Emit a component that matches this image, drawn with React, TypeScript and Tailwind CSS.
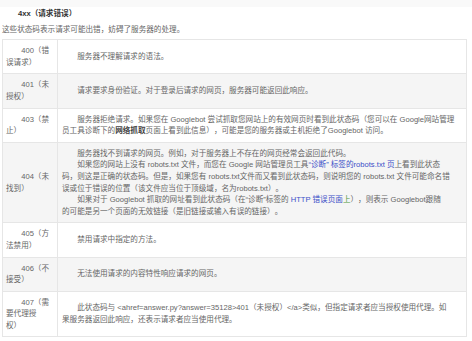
const rows: { code: string; desc: React.ReactNode; gray?: boolean }[] = [
  { code: "400（错误请求）", desc: <p className="indent-[2em]">服务器不理解请求的语法。</p> },
  {
    code: "401（未授权）",
    gray: true,
    desc: <p className="indent-[2em]">请求要求身份验证。对于登录后请求的网页，服务器可能返回此响应。</p>,
  },
  {
    code: "403（禁止）",
    desc: (
      <p className="indent-[2em]">
        服务器拒绝请求。如果您在 Googlebot 尝试抓取您网站上的有效网页时看到此状态码（您可以在 Google网站管理
        <br />
        员工具诊断下的<b className="font-bold text-[#444]">网络抓取</b>
        页面上看到此信息），可能是您的服务器或主机拒绝了Googlebot 访问。
      </p>
    ),
  },
  {
    code: "404（未找到）",
    gray: true,
    desc: (
      <>
        <p className="indent-[2em]">服务器找不到请求的网页。例如，对于服务器上不存在的网页经常会返回此代码。</p>
        <p className="indent-[2em]">
          如果您的网站上没有 robots.txt 文件，而您在 Google 网站管理员工具
          <span className="text-[#3b4fc8]">“诊断” 标签的robots.txt 页</span>上看到此状态
          <br />
          码，则这是正确的状态码。但是，如果您有 robots.txt文件而又看到此状态码，则说明您的 robots.txt 文件可能命名错
          <br />
          误或位于错误的位置（该文件应当位于顶级域，名为robots.txt）。
        </p>
        <p className="indent-[2em]">
          如果对于 Googlebot 抓取的网址看到此状态码（在“诊断”标签的 <span className="text-[#3b4fc8]">HTTP 错误页面</span>
          <span className="text-[#4f9a3c]">上</span>），则表示 Googlebot跟随
          <br />
          的可能是另一个页面的无效链接（是旧链接或输入有误的链接）。
        </p>
      </>
    ),
  },
  { code: "405（方法禁用）", desc: <p className="indent-[2em]">禁用请求中指定的方法。</p> },
  {
    code: "406（不接受）",
    gray: true,
    desc: <p className="indent-[2em]">无法使用请求的内容特性响应请求的网页。</p>,
  },
  {
    code: "407（需要代理授权）",
    desc: (
      <p className="indent-[2em]">
        此状态码与 &lt;ahref=answer.py?answer=35128&gt;401（未授权）&lt;/a&gt;类似，但指定请求者应当授权使用代理。如
        <br />
        果服务器返回此响应，还表示请求者应当使用代理。
      </p>
    ),
  },
];

export default function App() {
  return (
    <div
      className="h-[341px] w-[472px] overflow-hidden bg-white text-[7.6px] leading-[11.6px] text-[#666] [text-spacing-trim:space-all]"
      style={{ fontFamily: '"Liberation Sans", "Noto Sans CJK SC", sans-serif' }}
    >
      <div className="h-[7px] bg-[#f9f9f9]" />
      <h3 className="mt-[1px] pl-[18px] font-bold text-[#333]">4xx（请求错误）</h3>
      <p className="mt-[4px] pl-[2px]">这些状态码表示请求可能出错，妨碍了服务器的处理。</p>

      <table className="mt-[4px] ml-[2px] w-[465px] border-collapse border border-[#e4e4e4]">
        <tbody>
          {rows.map((row) => (
            <tr key={row.code} className={row.gray ? "bg-[#f5f5f5]" : "bg-white"}>
              <td className="border border-[#e6e6e6] py-[5px] pl-[3px] pr-[6px] align-middle">
                <p className="w-[44px] indent-[2em]">{row.code}</p>
              </td>
              <td className="border border-[#e6e6e6] py-[5px] pl-[4px] pr-[4px] align-middle">{row.desc}</td>
            </tr>
          ))}
        </tbody>
      </table>
    </div>
  );
}
